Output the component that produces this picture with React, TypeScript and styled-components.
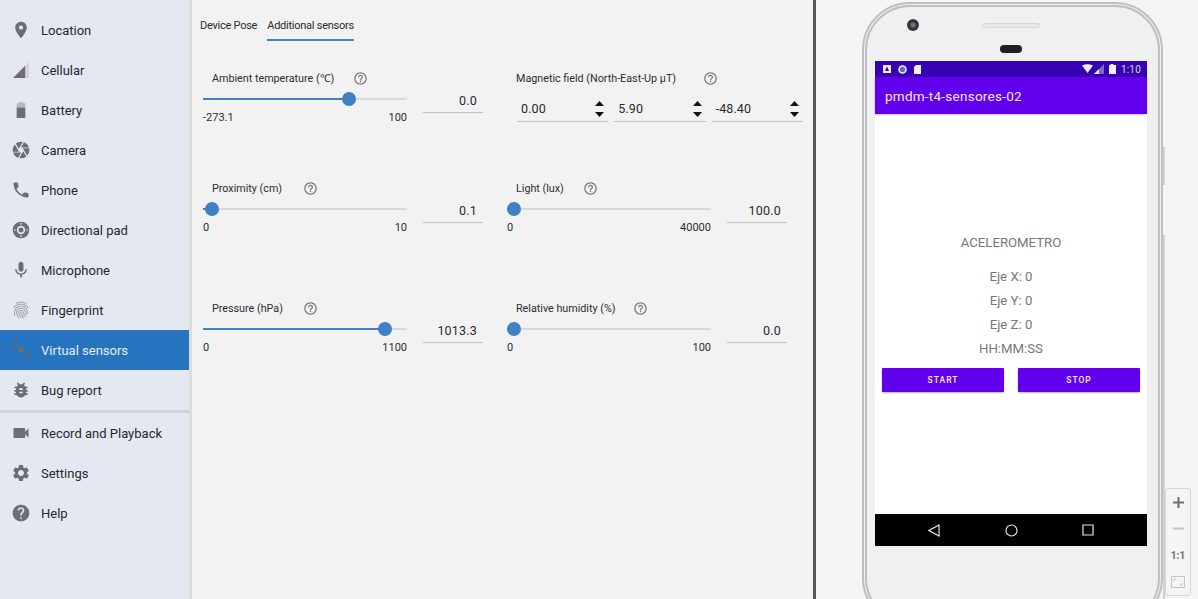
import { ReactNode } from 'react';
import styled, { createGlobalStyle } from 'styled-components';
import {
  MdBugReport,
  MdCamera,
  MdFingerprint,
  MdHelp,
  MdHelpOutline,
  MdLocationOn,
  MdMic,
  MdPhone,
  MdSettings,
  MdVideocam,
} from 'react-icons/md';

const GlobalStyle = createGlobalStyle`
  html, body {
    margin: 0;
    height: 100%;
    overflow: hidden;
    background: #f2f2f2;
    font-family: Roboto, "Liberation Sans", sans-serif;
  }
`;

const Page = styled.div`
  display: flex;
  width: 1198px;
  height: 599px;
  overflow: hidden;
`;

const Sidebar = styled.nav`
  box-sizing: border-box;
  flex: 0 0 192px;
  height: 599px;
  padding-top: 10px;
  background: #e4e9f1;
  border-right: 3px solid #dcdcdc;
`;

const NavRow = styled.div<{ $active?: boolean; $faint?: boolean }>`
  display: flex;
  align-items: center;
  gap: 10px;
  height: 40px;
  padding-left: 11px;
  font-size: 13px;
  color: ${p => (p.$active ? '#e6edf6' : '#27272f')};
  background: ${p => (p.$active ? '#2673bf' : 'transparent')};
  svg {
    flex: none;
    width: 20px;
    height: 20px;
    fill: ${p => (p.$faint ? '#8f8f93' : '#6d6d72')};
  }
`;

const NavDivider = styled.div`
  height: 3px;
  background: #d3d4d7;
`;

const Main = styled.main`
  flex: 0 0 621px;
  height: 599px;
  background: #f2f2f2;
  border-right: 3px solid #56545a;
`;

const Tabs = styled.div`
  display: flex;
  gap: 10px;
  height: 31px;
  margin-top: 10px;
  padding-left: 8px;
`;

const Tab = styled.div<{ $active?: boolean }>`
  box-sizing: border-box;
  height: 31px;
  padding-top: 9px;
  font-size: 11px;
  letter-spacing: -0.25px;
  line-height: 14px;
  color: #2a2a30;
  border-bottom: 2px solid ${p => (p.$active ? '#3f80c6' : 'transparent')};
`;

const SensorGrid = styled.div`
  display: grid;
  grid-template-columns: 280px 296px;
  grid-template-rows: 110px 120px 110px;
  column-gap: 24px;
  margin-top: 29px;
  padding-left: 11px;
`;

const Sensor = styled.section`
  display: flex;
  flex-direction: column;
`;

const LabelRow = styled.div`
  display: flex;
  align-items: center;
  height: 16px;
  padding-left: 9px;
`;

const Label = styled.span<{ $width: number }>`
  width: ${p => p.$width}px;
  font-size: 10.75px;
  color: #2d2d33;
  white-space: nowrap;
`;

const HelpIcon = styled(MdHelpOutline)`
  width: 15px;
  height: 15px;
  fill: #77777a;
  margin-left: -1px;
`;

const SliderRow = styled.div`
  display: flex;
  gap: 16px;
  margin-top: 6px;
`;

const SliderColumn = styled.div`
  width: 204px;
`;

const Track = styled.div`
  position: relative;
  height: 14px;
  &::before {
    content: '';
    position: absolute;
    left: 0;
    right: 0;
    top: 6px;
    height: 2px;
    background: #d8d8d8;
  }
`;

const TrackFill = styled.div`
  position: absolute;
  left: 0;
  top: 6px;
  height: 2px;
  background: #3f80c6;
`;

const Thumb = styled.div`
  position: absolute;
  top: 0;
  width: 14px;
  height: 14px;
  margin-left: -7px;
  border-radius: 50%;
  background: #3f80c6;
`;

const Range = styled.div`
  display: flex;
  justify-content: space-between;
  margin-top: 5px;
  font-size: 11px;
  line-height: 14px;
  color: #2d2d33;
`;

const ValueBox = styled.div`
  box-sizing: border-box;
  width: 60px;
  height: 22px;
  margin-top: -1px;
  padding: 1px 6px 0 0;
  text-align: right;
  font-size: 12.5px;
  line-height: 18px;
  letter-spacing: 0.2px;
  color: #2a2a30;
  border-bottom: 1px solid #c4c4c4;
`;

const SpinnerRow = styled.div`
  display: flex;
  gap: 6px;
  width: 286px;
  margin-top: 10px;
  margin-left: 10px;
`;

const Spinner = styled.div`
  box-sizing: border-box;
  flex: 1;
  display: flex;
  align-items: center;
  justify-content: space-between;
  height: 26px;
  padding: 0 4px;
  font-size: 12.5px;
  letter-spacing: 0.1px;
  color: #2a2a30;
  border-bottom: 1px solid #c4c4c4;
`;

const SpinArrows = styled.div`
  display: flex;
  flex-direction: column;
  gap: 6px;
  svg {
    display: block;
    width: 9px;
    height: 5px;
    fill: #111;
  }
`;

const DeviceArea = styled.aside`
  position: relative;
  flex: 1;
  height: 599px;
  padding: 2px 0 0 46px;
  background: #f5f5f5;
  box-sizing: border-box;
`;

const Phone = styled.div`
  position: relative;
  box-sizing: border-box;
  width: 301px;
  height: 624px;
  padding: 54px 8px 0;
  background: #eff0f2;
  border: 5px double #c0bec0;
  border-radius: 48px;
`;

const SideButton = styled.div<{ $top: number; $height: number }>`
  position: absolute;
  right: -7px;
  top: ${p => p.$top}px;
  width: 2px;
  height: ${p => p.$height}px;
  background: #d2d0d2;
`;

const Camera = styled.div`
  position: absolute;
  left: 40px;
  top: 12px;
  width: 12px;
  height: 12px;
  border-radius: 50%;
  background: radial-gradient(circle, #77707a 0 20%, #2e2a2e 45%, #5b5759 100%);
`;

const Speaker = styled.div`
  position: absolute;
  left: 115px;
  top: 16px;
  width: 58px;
  height: 5px;
  border-radius: 3px;
  background: #e8e8e8;
  border: 1px solid #d8d8d8;
  box-sizing: border-box;
`;

const Earpiece = styled.div`
  position: absolute;
  left: 133px;
  top: 38px;
  width: 22px;
  height: 8px;
  border-radius: 4px;
  background: #231f20;
`;

const Screen = styled.div`
  display: flex;
  flex-direction: column;
  width: 272px;
  height: 485px;
  background: #fff;
`;

const StatusBar = styled.div`
  display: flex;
  align-items: center;
  gap: 7px;
  height: 16px;
  padding: 0 6px 0 8px;
  background: #3700b3;
  svg {
    display: block;
  }
`;

const StatusRight = styled.div`
  display: flex;
  align-items: center;
  gap: 5px;
  margin-left: auto;
  color: #d9d0f2;
  font-size: 10px;
  letter-spacing: 0.2px;
`;

const AppBar = styled.div`
  display: flex;
  align-items: center;
  height: 37px;
  padding-left: 10px;
  background: #6200ee;
  color: #f2eafd;
  font-size: 13.5px;
  letter-spacing: 0.25px;
  box-shadow: 0 1px 2px rgba(0, 0, 0, 0.25);
`;

const Content = styled.div`
  flex: 1;
  display: flex;
  flex-direction: column;
  align-items: center;
  padding-top: 116px;
  color: #777;
  font-size: 13.2px;
`;

const Reading = styled.div<{ $gap: number }>`
  height: 24px;
  line-height: 25px;
  margin-bottom: ${p => p.$gap}px;
`;

const Buttons = styled.div`
  align-self: stretch;
  display: flex;
  justify-content: space-between;
  margin-top: 8px;
  padding: 0 7px;
`;

const Button = styled.div<{ $width: number }>`
  display: flex;
  align-items: center;
  justify-content: center;
  width: ${p => p.$width}px;
  height: 24px;
  border-radius: 1px;
  background: #6200ee;
  color: #f5effe;
  font-size: 8.5px;
  font-weight: 500;
  letter-spacing: 1px;
  box-shadow: 0 1px 2px rgba(0, 0, 0, 0.3);
`;

const NavBar = styled.div`
  display: flex;
  align-items: center;
  justify-content: space-between;
  height: 32px;
  padding: 0 53px 0 53px;
  background: #000;
  svg {
    display: block;
    fill: none;
    stroke: #e6e6e6;
    stroke-width: 1.2;
  }
`;

const ZoomBar = styled.div`
  position: absolute;
  left: 349px;
  top: 488px;
  display: flex;
  flex-direction: column;
  box-sizing: border-box;
  width: 26px;
  height: 108px;
  background: #f5f5f5;
  border: 1px solid #d6d6d6;
  border-radius: 3px;
`;

const ZoomItem = styled.div<{ $muted?: boolean }>`
  flex: 1;
  display: flex;
  align-items: center;
  justify-content: center;
  font-size: 10px;
  font-weight: 700;
  color: #6e6e6e;
  svg {
    display: block;
    fill: none;
    stroke: ${p => (p.$muted ? '#c4c4c4' : '#6e6e6e')};
    stroke-width: 2;
  }
`;

const CellularIcon = () => (
  <svg viewBox="0 0 24 24">
    <path d="M17 7l4.6-4.6v19.2H17z" fill="#d3d4d6" />
    <path d="M2.4 21.6 17 7v14.6z" />
  </svg>
);

const BatteryIcon = () => (
  <svg viewBox="0 0 24 24">
    <path d="M9.5 2.4h5V4h2.7v5H6.8V4h2.7z" fill="#b9b9bd" />
    <path d="M6.8 9h10.4v12.6H6.8z" />
  </svg>
);

const DpadIcon = () => (
  <svg viewBox="0 0 24 24">
    <path
      fillRule="evenodd"
      d="M12 2a10 10 0 1 0 0 20 10 10 0 0 0 0-20zm0 5a5 5 0 1 1 0 10 5 5 0 0 1 0-10z"
    />
    <circle cx="12" cy="12" r="3" />
    <circle cx="12" cy="4.6" r="1" fill="#e4e9f1" />
    <circle cx="12" cy="19.4" r="1" fill="#e4e9f1" />
    <circle cx="4.6" cy="12" r="1" fill="#e4e9f1" />
    <circle cx="19.4" cy="12" r="1" fill="#e4e9f1" />
  </svg>
);

const VirtualIcon = () => (
  <svg viewBox="0 0 24 24">
    <circle cx="12" cy="12" r="3.6" />
    <path d="M1.5 12A10.5 10.5 0 0 1 9 2" fill="none" stroke="#66666e" strokeWidth="2" />
    <path d="M22.5 12A10.5 10.5 0 0 1 15 22" fill="none" stroke="#66666e" strokeWidth="2" />
  </svg>
);

const Arrow = ({ down }: { down?: boolean }) => (
  <svg viewBox="0 0 9 5">
    <path d={down ? 'M0 0h9L4.5 5z' : 'M0 5h9L4.5 0z'} />
  </svg>
);

const navTop: [string, ReactNode][] = [
  ['Location', <MdLocationOn key="a" />],
  ['Cellular', <CellularIcon key="b" />],
  ['Battery', <BatteryIcon key="c" />],
  ['Camera', <MdCamera key="d" />],
  ['Phone', <MdPhone key="e" />],
  ['Directional pad', <DpadIcon key="f" />],
  ['Microphone', <MdMic key="g" />],
  ['Fingerprint', <MdFingerprint key="h" />],
  ['Virtual sensors', <VirtualIcon key="i" />],
  ['Bug report', <MdBugReport key="j" />],
];

const navBottom: [string, ReactNode][] = [
  ['Record and Playback', <MdVideocam key="a" />],
  ['Settings', <MdSettings key="b" />],
  ['Help', <MdHelp key="c" />],
];

interface SliderSensor {
  label: string;
  labelWidth: number;
  min: number;
  max: number;
  value: number;
  text: string;
}

const sliders: SliderSensor[] = [
  { label: 'Proximity (cm)', labelWidth: 92, min: 0, max: 10, value: 0.1, text: '0.1' },
  { label: 'Light (lux)', labelWidth: 68, min: 0, max: 40000, value: 100, text: '100.0' },
  { label: 'Pressure (hPa)', labelWidth: 92, min: 0, max: 1100, value: 1013.3, text: '1013.3' },
  { label: 'Relative humidity (%)', labelWidth: 118, min: 0, max: 100, value: 0, text: '0.0' },
];

function SliderBlock({ sensor }: { sensor: SliderSensor }) {
  const ratio = (sensor.value - sensor.min) / (sensor.max - sensor.min);
  const center = 7 + ratio * 190;
  return (
    <Sensor>
      <LabelRow>
        <Label $width={sensor.labelWidth}>{sensor.label}</Label>
        <HelpIcon />
      </LabelRow>
      <SliderRow>
        <SliderColumn>
          <Track>
            <TrackFill style={{ width: center }} />
            <Thumb style={{ left: center }} />
          </Track>
          <Range>
            <span>{sensor.min}</span>
            <span>{sensor.max}</span>
          </Range>
        </SliderColumn>
        <ValueBox>{sensor.text}</ValueBox>
      </SliderRow>
    </Sensor>
  );
}

export default function App() {
  return (
    <Page>
      <GlobalStyle />
      <Sidebar>
        {navTop.map(([label, icon]) => (
          <NavRow key={label} $active={label === 'Virtual sensors'} $faint={label === 'Fingerprint'}>
            {icon}
            {label}
          </NavRow>
        ))}
        <NavDivider />
        {navBottom.map(([label, icon]) => (
          <NavRow key={label}>
            {icon}
            {label}
          </NavRow>
        ))}
      </Sidebar>

      <Main>
        <Tabs>
          <Tab>Device Pose</Tab>
          <Tab $active>Additional sensors</Tab>
        </Tabs>
        <SensorGrid>
          <SliderBlock
            sensor={{
              label: 'Ambient temperature (℃)',
              labelWidth: 142,
              min: -273.1,
              max: 100,
              value: 0,
              text: '0.0',
            }}
          />
          <Sensor>
            <LabelRow>
              <Label $width={188}>Magnetic field (North-East-Up µT)</Label>
              <HelpIcon />
            </LabelRow>
            <SpinnerRow>
              {['0.00', '5.90', '-48.40'].map(v => (
                <Spinner key={v}>
                  {v}
                  <SpinArrows>
                    <Arrow />
                    <Arrow down />
                  </SpinArrows>
                </Spinner>
              ))}
            </SpinnerRow>
          </Sensor>
          {sliders.map(s => (
            <SliderBlock key={s.label} sensor={s} />
          ))}
        </SensorGrid>
      </Main>

      <DeviceArea>
        <Phone>
          <SideButton $top={140} $height={38} />
          <SideButton $top={228} $height={400} />
          <Camera />
          <Speaker />
          <Earpiece />
          <Screen>
            <StatusBar>
              <svg width="8" height="8" viewBox="0 0 8 8">
                <path d="M0 0h8v8H0z" fill="#f1edfa" />
                <path d="M4 1.5 6 6H2z" fill="#3700b3" />
              </svg>
              <svg width="9" height="9" viewBox="0 0 9 9">
                <circle cx="4.5" cy="4.5" r="3.5" fill="#6d62d8" stroke="#f1edfa" strokeWidth="1.6" />
              </svg>
              <svg width="7" height="9" viewBox="0 0 7 9">
                <path d="M2 0h5v9H0V2z" fill="#f1edfa" />
              </svg>
              <StatusRight>
                <svg width="34" height="10" viewBox="0 0 34 10">
                  <path d="M0 1.5Q5.5-.8 11 1.5L5.5 9z" fill="#f1edfa" />
                  <path d="M12 10 22 0v10z" fill="#7d66d6" />
                  <path d="M12 10l5-5v5z" fill="#f1edfa" />
                  <path d="M27 1h1.5V0h3v1H34v9h-7z" fill="#f1edfa" />
                </svg>
                1:10
              </StatusRight>
            </StatusBar>
            <AppBar>pmdm-t4-sensores-02</AppBar>
            <Content>
              <Reading $gap={10}>ACELEROMETRO</Reading>
              <Reading $gap={0}>Eje X: 0</Reading>
              <Reading $gap={0}>Eje Y: 0</Reading>
              <Reading $gap={0}>Eje Z: 0</Reading>
              <Reading $gap={0}>HH:MM:SS</Reading>
              <Buttons>
                <Button $width={122}>START</Button>
                <Button $width={122}>STOP</Button>
              </Buttons>
            </Content>
            <NavBar>
              <svg width="12" height="13" viewBox="0 0 12 13">
                <path d="M11 1v11L1 6.5z" />
              </svg>
              <svg width="13" height="13" viewBox="0 0 13 13">
                <circle cx="6.5" cy="6.5" r="5.5" />
              </svg>
              <svg width="12" height="12" viewBox="0 0 12 12">
                <path d="M1 1h10v10H1z" />
              </svg>
            </NavBar>
          </Screen>
        </Phone>
        <ZoomBar>
          <ZoomItem>
            <svg width="11" height="11" viewBox="0 0 11 11">
              <path d="M5.5 0v11M0 5.5h11" />
            </svg>
          </ZoomItem>
          <ZoomItem $muted>
            <svg width="11" height="11" viewBox="0 0 11 11">
              <path d="M0 5.5h11" />
            </svg>
          </ZoomItem>
          <ZoomItem>1:1</ZoomItem>
          <ZoomItem $muted>
            <svg width="14" height="12" viewBox="0 0 14 12" style={{ strokeWidth: 1 }}>
              <path d="M.5.5h13v11H.5zM3 5V3h2M11 7v2H9" />
            </svg>
          </ZoomItem>
        </ZoomBar>
      </DeviceArea>
    </Page>
  );
}
